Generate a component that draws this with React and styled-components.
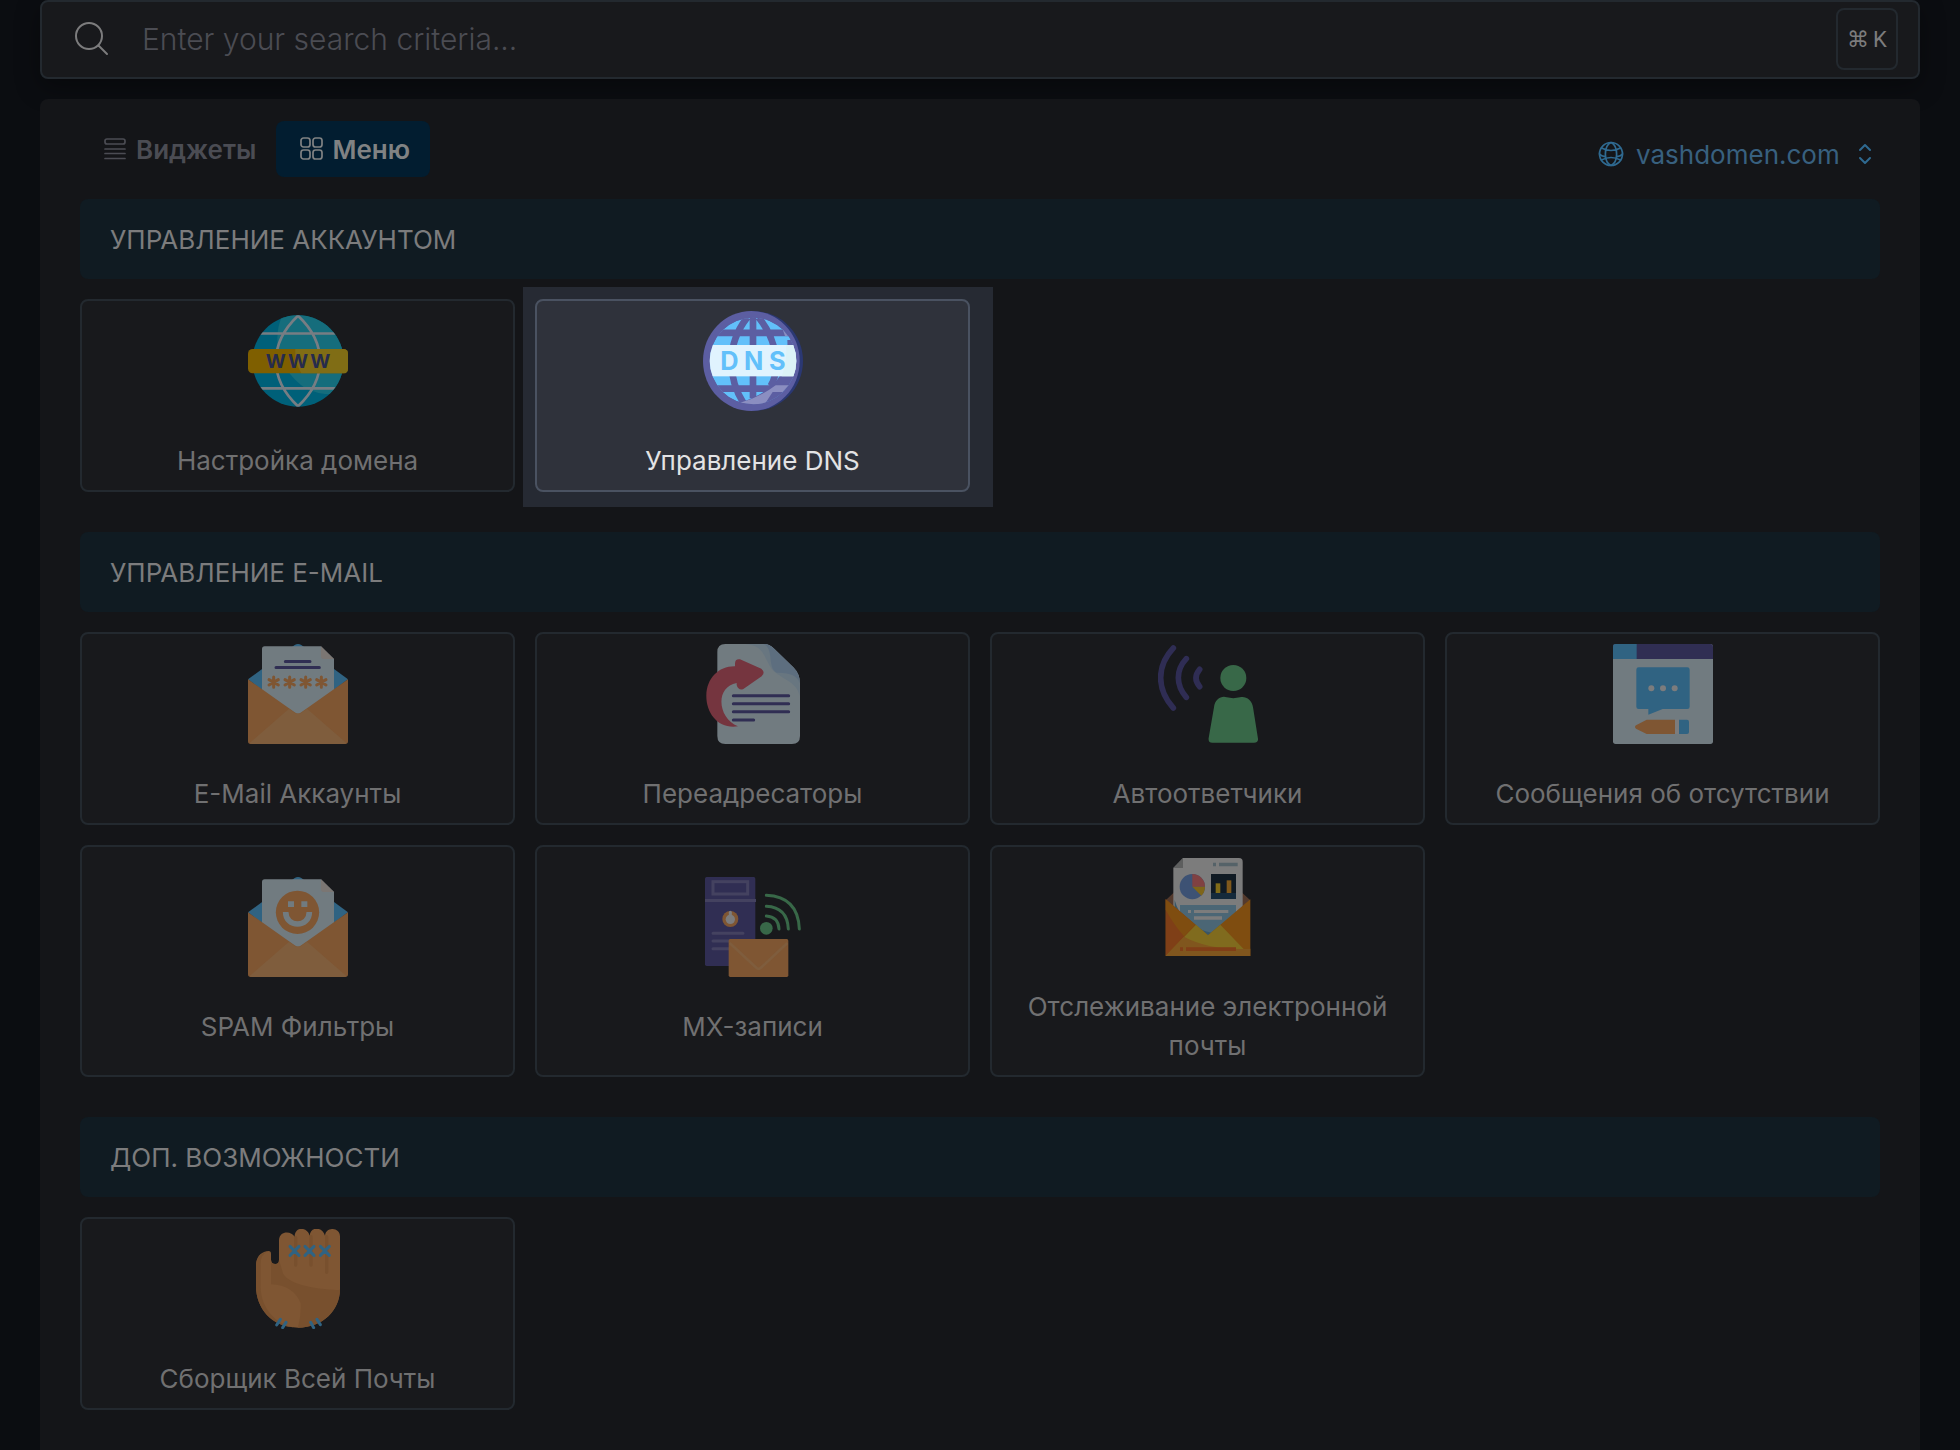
import React from "react";
import styled, { createGlobalStyle, css } from "styled-components";

const c = {
  page: "#0b0d11",
  panel: "#141518",
  surface: "#18191c",
  line: "#23292f",
  section: "#101b22",
  text: "#7c7c7d",
  muted: "#4b4c53",
  link: "#38607f",
  linkIcon: "#2f6a91",
  active: "#021d30",
};

const Global = createGlobalStyle`
  *, *::before, *::after { box-sizing: border-box; }
  body {
    margin: 0;
    background: ${c.page};
    color: ${c.text};
    font-family: Inter, "Open Sans", "Noto Sans", sans-serif;
    font-size: 26px;
  }
  html, body, #root { height: 100%; }
`;

const Page = styled.div`
  display: flex;
  flex-direction: column;
  gap: 20px;
  min-height: 100%;
  padding: 0 40px;
`;

const Search = styled.form`
  display: flex;
  align-items: center;
  height: 79px;
  padding: 0 20px 1px 33px;
  background: ${c.surface};
  border: 2px solid ${c.line};
  border-radius: 8px;
  box-shadow: 0 8px 24px rgba(0, 0, 0, 0.35);
`;

const SearchLabel = styled.label`
  display: flex;
  flex: 1;
  align-items: center;
  gap: 33px;
`;

const SearchInput = styled.input`
  flex: 1;
  min-width: 0;
  height: 60px;
  padding: 0;
  border: 0;
  outline: 0;
  background: transparent;
  color: ${c.text};
  font-family: inherit;
  font-size: 30px;
  font-weight: 300;
  &::placeholder { color: ${c.muted}; opacity: 1; }
`;

const Shortcut = styled.kbd`
  display: flex;
  align-items: center;
  justify-content: center;
  gap: 4px;
  width: 62px;
  height: 62px;
  border: 2px solid ${c.line};
  border-radius: 8px;
  font-family: Roboto, "DejaVu Sans", sans-serif;
  font-size: 22px;
`;

const Panel = styled.main`
  flex: 1;
  padding: 22px 40px 40px;
  background: ${c.panel};
  border-radius: 8px;
`;

const Toolbar = styled.div`
  display: flex;
  align-items: flex-end;
  justify-content: space-between;
  margin-bottom: 22px;
`;

const Tabs = styled.div`
  display: flex;
`;

const Tab = styled.button`
  display: flex;
  align-items: center;
  gap: 8px;
  height: 56px;
  padding: 0 20px 0 22px;
  border: 0;
  border-radius: 8px;
  background: ${(p) => (p.$active ? c.active : "transparent")};
  color: ${(p) => (p.$active ? "#808283" : c.muted)};
  font-family: inherit;
  font-size: 26px;
  font-weight: 600;
`;

const Domain = styled.label`
  display: flex;
  align-items: center;
  gap: 12px;
  height: 46px;
  padding-right: 2px;
  color: ${c.linkIcon};
`;

const DomainSelect = styled.select`
  appearance: none;
  height: 46px;
  padding: 0;
  border: 0;
  background: transparent;
  color: ${c.link};
  font-family: inherit;
  font-size: 26px;
`;

const Section = styled.section`
  margin-bottom: 40px;
`;

const SectionTitle = styled.h2`
  display: flex;
  align-items: center;
  height: 80px;
  margin: 0 0 20px;
  padding: 0 30px;
  border-radius: 8px;
  background: ${c.section};
  font-size: 26px;
  font-weight: 400;
`;

const Grid = styled.ul`
  display: grid;
  grid-template-columns: repeat(4, minmax(0, 1fr));
  gap: 20px;
  margin: 0;
  padding: 0;
  list-style: none;
`;

const Cell = styled.li`
  display: flex;
  position: relative;
  isolation: isolate;
  ${(p) => p.$spotlight && css`
    &::before {
      content: "";
      position: absolute;
      z-index: -1;
      inset: -12px -23px -15px -12px;
      background: #262a33;
    }
  `}
`;

const Card = styled.a`
  display: flex;
  flex: 1;
  flex-direction: column;
  align-items: center;
  justify-content: center;
  gap: 30px;
  min-width: 0;
  padding: 10px;
  border: 2px solid ${(p) => (p.$spotlight ? "#4a5261" : c.line)};
  border-radius: 8px;
  background: ${(p) => (p.$spotlight ? "#2f323b" : c.surface)};
  color: ${(p) => (p.$spotlight ? "#e3e3e4" : "#707071")};
  font-size: 26px;
  line-height: 39px;
  text-align: center;
  text-decoration: none;
`;

const Picture = styled.svg`
  display: block;
  flex: none;
  width: 100px;
  height: 100px;
`;

const Glyph = styled.svg`
  display: block;
  flex: none;
  fill: none;
  stroke: currentColor;
  stroke-linecap: round;
  stroke-linejoin: round;
`;

const pic = (x, y, children) => () => (
  <Picture viewBox={`${x} ${y} 300 300`} aria-hidden="true">{children}</Picture>
);

const WwwIcon = pic(534, 93, <>
  <clipPath id="www-globe"><circle cx="684" cy="243" r="137" /></clipPath>
  <g clipPath="url(#www-globe)">
    <rect x="534" y="93" width="300" height="300" fill="#006079" />
    <path d="M640 100C600 180 630 270 700 320Q740 345 800 343L840 300V93H650Z" fill="#156d7c" />
    <g fill="none" stroke="#777d83" strokeWidth="8">
      <path d="M560 160.500H810M560 325H810M684 107C596 190 596 296 684 379C772 296 772 190 684 107Z" />
    </g>
  </g>
  <rect x="534" y="207" width="300" height="73" rx="14" fill="#7f5f00" />
  <path d="M676 207H820Q834 207 834 221V266Q834 280 820 280H694Q672 245 676 207Z" fill="#806d15" />
  <text x="617 684 751" y="264" textAnchor="middle" fontFamily="Inter, sans-serif" fontWeight="700" fontSize="58" fill="#262b4c">WWW</text>
</>);

const DnsIcon = pic(579, 93, <>
  <clipPath id="dns-globe"><circle cx="729" cy="243" r="130" /></clipPath>
  <ellipse cx="733" cy="243" rx="146" ry="149" fill="#2b3873" />
  <ellipse cx="724" cy="243" rx="145" ry="150" fill="#5c5ea2" />
  <g clipPath="url(#dns-globe)">
    <circle cx="729" cy="243" r="130" fill="#62c0fa" />
    <path d="M832 180C836 260 812 330 690 368L720 393H870V180Z" fill="#5c5ea2" />
    <g fill="none" stroke="#5c5ea2" strokeWidth="20">
      <path d="M590 158.500H870M590 326H795M729 110V355M712 112C650 190 650 290 702 372M746 112C808 190 808 275 782 318" />
    </g>
    <path d="M690 368Q750 352 797 316H836L818 336H788L765 371Q725 378 690 368Z" fill="#8b8ec1" />
    <path d="M818 148L834 168H825Z" fill="#8b8ec1" />
    <rect x="590" y="195" width="280" height="94" fill="#e0f3fe" />
    <path d="M828 195H870V289H815Q832 245 828 195Z" fill="#dcf2f7" />
  </g>
  <text x="658 731 802" y="269" textAnchor="middle" fontFamily="Inter, sans-serif" fontWeight="700" fontSize="76" fill="#62c0fa">DNS</text>
</>);

const Envelope = ({ top }) => (
  <g transform={`translate(0 ${top})`}>
    <path d="M54 106L194 3Q204 -3 214 3L354 106L204 220Z" fill="#306382" />
    <path d="M104 7H273L312 45V170L204 240L96 170V15Q96 7 104 7Z" fill="#717b80" />
    <path d="M273 7L312 45H281Q273 45 273 37Z" fill="#7b7673" />
    <path d="M54 106L194 205Q204 212 214 205L354 106V292Q354 300 346 300H62Q54 300 54 292Z" fill="#7f5633" />
    <path d="M59 297L177 194L194 206Q204 213 214 206L231 194L349 297Q347 300 342 300H66Q61 300 59 297Z" fill="#7f5d3d" />
  </g>
);

const star = (x) => (
  <path key={x} d={`M${x} 141V172M${x - 14} 149L${x + 14} 165M${x + 14} 149L${x - 14} 165`} />
);

const MailAccountsIcon = pic(54, 42, <>
  <Envelope top={42} />
  <path d="M166 94.500H240M138 112.500H268" stroke="#302e53" strokeWidth="9" strokeLinecap="round" />
  <g stroke="#7f5633" strokeWidth="9" strokeLinecap="round">{[131, 179, 227, 274].map(star)}</g>
</>);

const SpamIcon = pic(54, 51, <>
  <Envelope top={51} />
  <circle cx="202.500" cy="157" r="65" fill="#7f5633" />
  <path d="M174 124H192V141H174ZM214 124H232V141H214Z" fill="#717b80" />
  <path d="M167 156C167 204 238 204 238 156" fill="none" stroke="#717b80" strokeWidth="17" />
</>);

const ForwardIcon = pic(69, 42, <>
  <path d="M136 42H252Q268 42 280 54L340 112Q360 132 360 160V318Q360 342 336 342H136Q112 342 112 318V66Q112 42 136 42Z" fill="#717b80" />
  <path d="M196 42C258 46 252 92 280 122C308 148 352 156 359 198V156Q359 132 341 113L281 55Q268 42 250 42Z" fill="#687680" />
  <path d="M250 42C284 56 260 112 290 128Q348 126 359 158Q359 130 341 113L281 55Q268 42 250 42Z" fill="#5d6e7f" />
  <path d="M165 109V101Q165 86 180 88L244 116Q257 127 245 139L189 178Q174 181 170 165V159C105 170 112 265 174 289C116 298 78 252 79 196C80 145 116 108 165 109Z" fill="#75353f" />
  <path d="M160 197.500H326M160 221.500H326M160 245.500H326M160 270H221" stroke="#302e53" strokeWidth="9" strokeLinecap="round" />
</>);

const AutoreplyIcon = pic(54, 42, <>
  <g fill="none" stroke="#2f2d54" strokeWidth="17" strokeLinecap="round">
    <path d="M100 54Q62 94 62 143T100 234M139 86Q115 112 115 143T139 202M179 118Q157 144 179 170" />
  </g>
  <circle cx="280" cy="144" r="39" fill="#386848" />
  <path d="M222 232C224 208 245 196 260 202Q280 207 300 202C318 198 336 210 339 232L354 326Q355 338 342 338H217Q204 338 206 324Z" fill="#386848" />
</>);

const VacationIcon = pic(69, 42, <>
  <rect x="69" y="42" width="300" height="300" rx="8" fill="#717b80" />
  <path d="M77 42H361Q369 42 369 50V87H69V50Q69 42 77 42Z" fill="#302e53" />
  <path d="M77 42H140V87H69V50Q69 42 77 42Z" fill="#306382" />
  <path d="M146 112H292Q299 112 299 119V230Q299 237 292 237H218L175 254V237H146Q139 237 139 230V119Q139 112 146 112Z" fill="#306382" />
  <g fill="#7c7c7d"><circle cx="184" cy="175" r="9" /><circle cx="219" cy="175" r="9" /><circle cx="254" cy="175" r="9" /></g>
  <path d="M170 269H255V312H170L138 296Q132 291 138 286Z" fill="#7f5633" />
  <path d="M255 269H267V312H255Z" fill="#7c7c7d" />
  <path d="M267 269H291Q297 269 297 275V306Q297 312 291 312H267Z" fill="#306382" />
</>);

const MxIcon = pic(69, 51, <>
  <rect x="75" y="51" width="151" height="267" rx="5" fill="#302e53" />
  <g fill="none" stroke="#444260" strokeWidth="9">
    <rect x="99" y="65" width="104" height="37" />
    <path d="M75 121.500H228" />
    <path d="M99 219.500H189M99 243H160M99 266.500H160" strokeLinecap="round" />
  </g>
  <circle cx="151" cy="177" r="24" fill="#7f5633" />
  <circle cx="151" cy="178" r="14" fill="#7c7c7d" />
  <path d="M151 157V175" stroke="#7c7c7d" strokeWidth="9" strokeLinecap="round" />
  <rect x="146" y="237" width="179" height="114" rx="5" fill="#7f5633" />
  <path d="M149 249L229 323Q236 330 243 323L322 249" fill="none" stroke="#7f5d3d" strokeWidth="8" />
  <circle cx="259" cy="205" r="19" fill="#386848" />
  <path d="M259 168Q295 170 297 207M259 139Q322 142 325 207M259 106Q354 110 358 207" fill="none" stroke="#386848" strokeWidth="9" strokeLinecap="round" />
</>);

const TrackIcon = pic(54, 51, <>
  <path d="M77 181L104 155H303L331 181L204 290Z" fill="#543a2d" />
  <path d="M129 54H297Q308 54 308 65V210L204 286L100 205V84Z" fill="#7c7c7c" />
  <path d="M129 54V84H100Z" fill="#5d5e5e" />
  <path d="M219 68H228V79H219ZM237 68H293V79H237Z" fill="#556268" />
  <circle cx="157" cy="140" r="38" fill="#3d5274" />
  <path d="M157 140V102A38 38 0 0 1 195 140Z" fill="#804142" />
  <path d="M157 140H195A38 38 0 0 1 184 167Z" fill="#7f6519" />
  <path d="M213 102H288V177H213Z" fill="#101a23" /><path d="M213 159H288V177H213Z" fill="#152a3b" />
  <path d="M227 130H241V159H227Z" fill="#806b18" /><path d="M260 121H274V159H260Z" fill="#80591c" />
  <path d="M120 195H288V225L204 286L120 220Z" fill="#4b6675" />
  <path d="M104 180Q125 260 214 278L204 286L104 208Z" fill="#395666" />
  <path d="M144 210H153V219H144ZM162 210H265V219H162ZM162 229H246V239H162Z" fill="#7c7c7c" />
  <path d="M77 178L204 286L331 178V348H77Z" fill="#7f4d10" />
  <path d="M77 178L166 254L77 348Z" fill="#7f3f17" />
  <path d="M77 210Q100 252 132 289L166 254L77 178Z" fill="#7f4d10" />
  <path d="M77 348L168 254L204 286L241 254L331 348Z" fill="#806b1e" />
  <path d="M77 348L132 290Q210 332 331 326V348Z" fill="#80561e" />
  <path d="M120 322H129V333H120ZM138 322H288V333H138Z" fill="#803e17" />
</>);

const FistIcon = pic(54, 42, <>
  <path d="M147 76C148 46 185 47 194 66C193 34 232 34 239 62C241 34 277 34 285 62C287 34 330 36 330 64V222C330 284 280 338 204 338C126 338 78 280 78 214V148C79 119 101 108 116 108Q123 108 123 116V134Q124 147 136 147Q147 147 147 134Z" fill="#7f5633" />
  <path d="M123 134Q124 147 136 147Q147 147 147 134L160 178Q190 220 330 226C328 286 280 338 204 338Q214 300 212 265Q190 210 123 208Z" fill="#78502e" />
  <path d="M92 144V216C92 280 140 330 192 337C125 334 78 280 78 214V148Q82 118 112 109Q92 120 92 144Z" fill="#78502e" />
  <path d="M197 68V150M243 65V150M290 65V172" stroke="#78502e" strokeWidth="10" strokeLinecap="round" />
  <g stroke="#306382" strokeWidth="9" strokeLinecap="round">
    <path d="M180 94L207 121M207 94L180 121M225 94L252 121M252 94L225 121M271 94L298 121M298 94L271 121" />
    <path d="M151 313L140 330M168 322L158 338M242 322L251 338M261 313L271 329" />
  </g>
</>);

const sections = [
  { title: "УПРАВЛЕНИЕ АККАУНТОМ", items: [
    { label: "Настройка домена", Icon: WwwIcon },
    { label: "Управление DNS", Icon: DnsIcon, spotlight: true },
  ] },
  { title: "УПРАВЛЕНИЕ E-MAIL", items: [
    { label: "E-Mail Аккаунты", Icon: MailAccountsIcon },
    { label: "Переадресаторы", Icon: ForwardIcon },
    { label: "Автоответчики", Icon: AutoreplyIcon },
    { label: "Сообщения об отсутствии", Icon: VacationIcon },
    { label: "SPAM Фильтры", Icon: SpamIcon },
    { label: "MX-записи", Icon: MxIcon },
    { label: "Отслеживание электронной почты", Icon: TrackIcon },
  ] },
  { title: "ДОП. ВОЗМОЖНОСТИ", items: [
    { label: "Сборщик Всей Почты", Icon: FistIcon },
  ] },
];

export default function App() {
  return (
    <>
      <Global />
      <Page>
        <Search role="search">
          <SearchLabel>
            <Glyph width="34" height="34" viewBox="0 0 34 34" strokeWidth="2" aria-hidden="true">
              <circle cx="14" cy="14" r="13" /><path d="M23.500 23.500L32 32" />
            </Glyph>
            <SearchInput type="text" aria-label="Search" placeholder="Enter your search criteria..." />
          </SearchLabel>
          <Shortcut><span>⌘</span><span>K</span></Shortcut>
        </Search>
        <Panel>
          <Toolbar>
            <Tabs role="tablist">
              <Tab type="button" role="tab" aria-selected="false">
                <Glyph width="26" height="24" viewBox="0 0 26 24" strokeWidth="1.7" aria-hidden="true">
                  <rect x="3" y="2" width="20" height="5" rx="2" />
                  <path d="M3 12H23M3 16.500H23M3 21.500H23" />
                </Glyph>
                Виджеты
              </Tab>
              <Tab type="button" role="tab" aria-selected="true" $active>
                <Glyph width="26" height="24" viewBox="0 0 26 24" strokeWidth="1.7" aria-hidden="true">
                  <rect x="3" y="1" width="9" height="9" rx="2.500" />
                  <rect x="15" y="1" width="9" height="9" rx="2.500" />
                  <rect x="3" y="13" width="9" height="9" rx="2.500" />
                  <rect x="15" y="13" width="9" height="9" rx="2.500" />
                </Glyph>
                Меню
              </Tab>
            </Tabs>
            <Domain>
              <Glyph width="26" height="26" viewBox="0 0 26 26" strokeWidth="1.700" aria-hidden="true">
                <circle cx="13" cy="13" r="11.500" />
                <path d="M13 1.500C5.500 5 5.500 21 13 24.500C20.500 21 20.500 5 13 1.500ZM3.500 7Q13 12 22.500 7M3.500 19Q13 14 22.500 19M1.500 13Q3 15 7.500 15.800M24.500 13Q23 15 18.500 15.800" />
              </Glyph>
              <DomainSelect aria-label="Domain" defaultValue="vashdomen.com">
                <option>vashdomen.com</option>
              </DomainSelect>
              <Glyph width="26" height="26" viewBox="0 0 26 26" strokeWidth="2" aria-hidden="true">
                <path d="M8 9L13 4L18 9M8 17L13 22L18 17" />
              </Glyph>
            </Domain>
          </Toolbar>
          {sections.map(({ title, items }) => (
            <Section key={title}>
              <SectionTitle>{title}</SectionTitle>
              <Grid>
                {items.map(({ label, Icon, spotlight }) => (
                  <Cell key={label} $spotlight={spotlight}>
                    <Card href="#" $spotlight={spotlight}>
                      <Icon />
                      <span>{label}</span>
                    </Card>
                  </Cell>
                ))}
              </Grid>
            </Section>
          ))}
        </Panel>
      </Page>
    </>
  );
}
